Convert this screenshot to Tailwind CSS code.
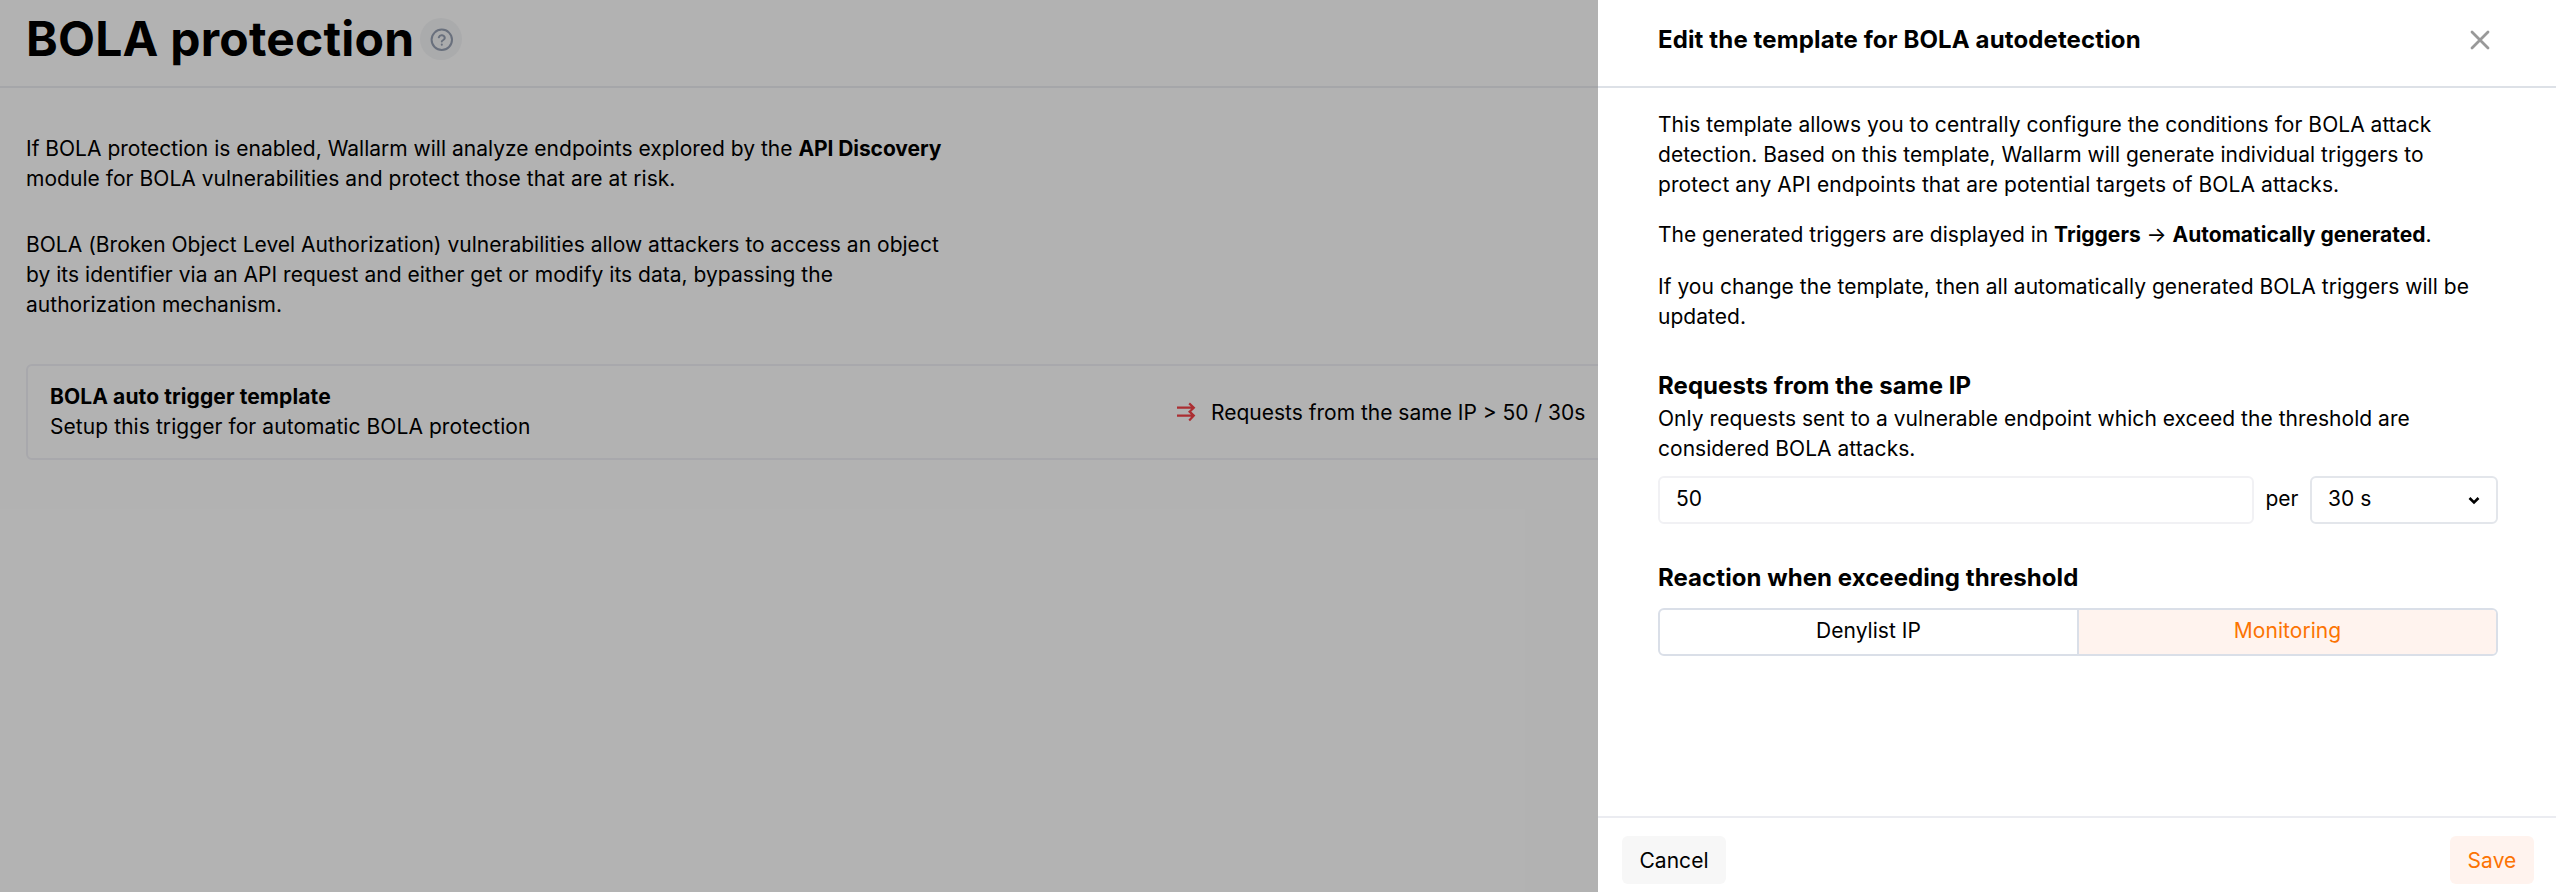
<!DOCTYPE html>
<html lang="en">
<head>
<meta charset="utf-8">
<title>BOLA protection</title>
<script src="https://cdn.jsdelivr.net/npm/@tailwindcss/browser@4"></script>
</head>
<body class="relative h-[892px] w-[2556px] overflow-hidden bg-white font-['Inter',sans-serif] text-[21px] leading-[30px] tracking-[0.04px] text-black whitespace-nowrap">
<main class="h-full">
  <header class="flex h-[88px] items-start gap-[6px] border-b-2 border-[#edeef3] pl-[26px]">
    <h1 class="pt-[9px] text-[48px] leading-[60px] font-bold tracking-[0.22px]">BOLA protection</h1>
    <span class="mt-[18px] flex size-[42px] items-center justify-center rounded-full bg-[#f4f5f7]">
      <svg class="size-6" viewBox="0 0 24 24" fill="none" stroke="#97a1b3" stroke-width="2" stroke-linecap="round"><circle cx="12.800" cy="12.800" r="10.200"/><path d="M9.800 10.300a3.100 3.100 0 0 1 6 .8c0 2-3 2.200-3 3.500"/><path d="M12.800 17.500v.2"/></svg>
    </span>
  </header>
  <section class="pt-[46px] pl-[26px]">
    <p><span class="tracking-normal">If BOLA protection is enabled, Wallarm will analyze endpoints explored by the <b class="tracking-[-0.08px]">API Discovery</b></span><br>module for BOLA vulnerabilities and protect those that are at risk.</p>
    <p class="mt-9 tracking-[0.02px]">BOLA (Broken Object Level Authorization) vulnerabilities allow attackers to access an object<br>by its identifier via an API request and either get or modify its data, bypassing the<br>authorization mechanism.</p>
    <div class="mt-[44px] mr-[26px] flex h-24 items-center rounded-md border-2 border-[#f1f1f6] pl-[22px]">
      <div class="w-[1126px]">
        <div class="font-bold tracking-[0.1px]">BOLA auto trigger template</div>
        <div class="tracking-[0.07px]">Setup this trigger for automatic BOLA protection</div>
      </div>
      <svg class="mr-[15px] h-5 w-5" viewBox="0 0 20 20" fill="none" stroke="#f54248" stroke-width="2.200"><path d="M1 5.700h17M1 13.600h17M13.200 1.400l4.600 4.300-4.200 3.950 4.200 3.950-4.600 4.800"/></svg>
      <span class="pt-0.5 tracking-normal">Requests from the same IP &gt; 50 / 30s</span>
    </div>
  </section>
</main>
<div class="absolute inset-0 bg-black/30"></div>
<aside class="absolute inset-y-0 right-0 flex w-[958px] flex-col bg-white">
  <header class="flex h-[88px] shrink-0 items-center justify-between border-b-2 border-[#dde1e7] pr-[66px] pb-[6px] pl-[60px]">
    <h2 class="text-[24px] font-bold tracking-[0.13px]">Edit the template for BOLA autodetection</h2>
    <svg class="size-5" viewBox="0 0 20 20" fill="none" stroke="#999" stroke-width="2.800" stroke-linecap="round"><path d="m2 2 16 16M18 2 2 18"/></svg>
  </header>
  <div class="flex-1 pt-[22px] pr-[58px] pl-[60px]">
    <p>This template allows you to centrally configure the conditions for BOLA attack<br><span class="tracking-[0.02px]">detection. Based on this template, Wallarm will generate individual triggers to</span><br><span class="tracking-[0.08px]">protect any API endpoints that are potential targets of BOLA attacks.</span></p>
    <p class="mt-5 tracking-normal">The generated triggers are displayed in <b>Triggers</b> → <b>Automatically generated</b>.</p>
    <p class="mt-[22px]">If you change the template, then all automatically generated BOLA triggers will be<br>updated.</p>
    <h3 class="mt-[38px] text-[24px] leading-8 font-bold tracking-[0.06px]">Requests from the same IP</h3>
    <p class="mt-0.5">Only requests sent to a vulnerable endpoint which exceed the threshold are<br>considered BOLA attacks.</p>
    <div class="mt-3 flex h-12 items-center">
      <div class="flex h-12 w-[596px] items-center rounded-md border-2 border-[#f1f1f4] pb-0.5 pl-4">50</div>
      <span class="w-14 pb-0.5 text-center">per</span>
      <div class="flex h-12 w-[188px] items-center justify-between rounded-md border-2 border-[#e3e6eb] pr-4 pl-4">
        <span class="pb-0.5">30 s</span>
        <svg class="h-3 w-3" viewBox="0 0 12 12" fill="none" stroke="#000" stroke-width="2.600"><path d="m1.500 4 4.500 4.400L10.500 4"/></svg>
      </div>
    </div>
    <h3 class="mt-[38px] text-[24px] leading-8 font-bold tracking-[0.06px]">Reaction when exceeding threshold</h3>
    <div class="mt-[14px] flex h-12 w-[840px] overflow-hidden rounded-md border-2 border-[#dadfe8]">
      <div class="flex flex-1 items-center justify-center border-r-2 border-[#dadfe8] pb-0.5">Denylist IP</div>
      <div class="flex flex-1 items-center justify-center bg-[#fff3ee] pb-0.5 text-[#fc7303]">Monitoring</div>
    </div>
  </div>
  <footer class="flex h-[76px] shrink-0 justify-between border-t-2 border-[#ebecf1] pt-[18px] pr-[22px] pl-6">
    <button class="h-12 w-[104px] rounded-md bg-[#f7f7f7] pt-0.5">Cancel</button>
    <button class="h-12 w-[84px] rounded-md bg-[#fff3ee] pt-0.5 text-[#fc7303]">Save</button>
  </footer>
</aside>
</body>
</html>
